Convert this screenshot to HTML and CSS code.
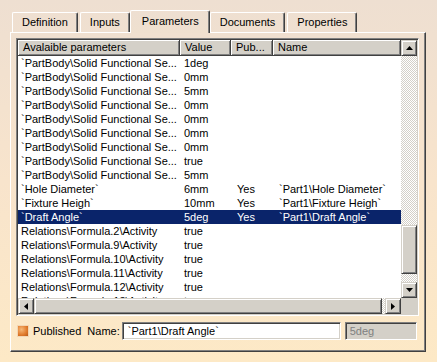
FILE: index.html
```html
<!DOCTYPE html>
<html>
<head>
    <meta charset="UTF-8">
    <title>Parameters</title>
    <link rel="stylesheet" href="styles.css">
</head>

<body>
    <!-- 选项卡 -->
    <div class="tabs">
        <div class="tab">Definition</div>
        <div class="tab">Inputs</div>
        <div class="tab active">Parameters</div>
        <div class="tab">Documents</div>
        <div class="tab">Properties</div>
    </div>

    <div class="panel">
        <!-- 参数列表 -->
        <div class="listbox">
            <div class="list">
                <div class="head">
                    <div class="hcell">Avalaible parameters</div>
                    <div class="hcell">Value</div>
                    <div class="hcell">Pub...</div>
                    <div class="hcell">Name</div>
                </div>
                <div class="row"><span>`PartBody\Solid Functional Se...</span><span>1deg</span><span></span><span></span></div>
                <div class="row"><span>`PartBody\Solid Functional Se...</span><span>0mm</span><span></span><span></span></div>
                <div class="row"><span>`PartBody\Solid Functional Se...</span><span>5mm</span><span></span><span></span></div>
                <div class="row"><span>`PartBody\Solid Functional Se...</span><span>0mm</span><span></span><span></span></div>
                <div class="row"><span>`PartBody\Solid Functional Se...</span><span>0mm</span><span></span><span></span></div>
                <div class="row"><span>`PartBody\Solid Functional Se...</span><span>0mm</span><span></span><span></span></div>
                <div class="row"><span>`PartBody\Solid Functional Se...</span><span>0mm</span><span></span><span></span></div>
                <div class="row"><span>`PartBody\Solid Functional Se...</span><span>true</span><span></span><span></span></div>
                <div class="row"><span>`PartBody\Solid Functional Se...</span><span>5mm</span><span></span><span></span></div>
                <div class="row"><span>`Hole Diameter`</span><span>6mm</span><span>Yes</span><span>`Part1\Hole Diameter`</span></div>
                <div class="row"><span>`Fixture Heigh`</span><span>10mm</span><span>Yes</span><span>`Part1\Fixture Heigh`</span></div>
                <div class="row selected"><span>`Draft Angle`</span><span>5deg</span><span>Yes</span><span>`Part1\Draft Angle`</span></div>
                <div class="row"><span>Relations\Formula.2\Activity</span><span>true</span><span></span><span></span></div>
                <div class="row"><span>Relations\Formula.9\Activity</span><span>true</span><span></span><span></span></div>
                <div class="row"><span>Relations\Formula.10\Activity</span><span>true</span><span></span><span></span></div>
                <div class="row"><span>Relations\Formula.11\Activity</span><span>true</span><span></span><span></span></div>
                <div class="row"><span>Relations\Formula.12\Activity</span><span>true</span><span></span><span></span></div>
                <div class="row"><span>Relations\Formula.13\Activity</span><span>true</span><span></span><span></span></div>
            </div>

            <!-- 竖向滚动条 -->
            <div class="vscroll">
                <div class="sbtn">
                    <svg width="7" height="4" viewBox="0 0 7 4"><polygon points="3.5,0 7,4 0,4" fill="#000"/></svg>
                </div>
                <div class="vtrack"><div class="vthumb"></div></div>
                <div class="sbtn">
                    <svg width="7" height="4" viewBox="0 0 7 4"><polygon points="0,0 7,0 3.5,4" fill="#000"/></svg>
                </div>
            </div>

            <!-- 横向滚动条 -->
            <div class="hscroll">
                <div class="sbtn">
                    <svg width="4" height="7" viewBox="0 0 4 7"><polygon points="4,0 4,7 0,3.5" fill="#000"/></svg>
                </div>
                <div class="hthumb"></div>
                <div class="htrack"></div>
                <div class="sbtn">
                    <svg width="4" height="7" viewBox="0 0 4 7"><polygon points="0,0 4,3.5 0,7" fill="#000"/></svg>
                </div>
            </div>
            <div class="corner"></div>
        </div>

        <!-- 底部 -->
        <div class="bottom">
            <span class="check"></span>
            <label class="pub">Published</label>
            <label class="name-label">Name:</label>
            <div class="field">`Part1\Draft Angle`</div>
            <div class="field disabled">5deg</div>
        </div>
    </div>
</body>
</html>
```

FILE: styles.css
```css
body {
    margin: 0;
    font-family: "Liberation Sans", Arial, sans-serif;
    font-size: 11px;
    color: #000;
    background: linear-gradient(#eedfd1, #f8e4cc 50%, #fde9c6);
    height: 362px;
    overflow: hidden;
}
/* 选项卡 */
.tabs {
    display: flex;
    align-items: flex-end;
    padding: 12px 0 0 12px;
    height: 20px;
}
.tab {
    height: 20px;
    box-sizing: border-box;
    padding: 0 9px;
    line-height: 19px;
    border-top: 1px solid #fff;
    border-left: 1px solid #fff;
    border-right: 1px solid #404040;
    box-shadow: inset -1px 0 #808080;
    border-radius: 2px 2px 0 0;
    margin-right: 2px;
}
.tab.active {
    height: 23px;
    margin: 0 0 -1px -2px;
    padding: 0 10px 0 11px;
    line-height: 21px;
    position: relative;
    z-index: 1;
    background: linear-gradient(#eedfd1, #efe0cf);
}
/* 面板 */
.panel {
    margin-left: 10px;
    width: 416px;
    height: 320px;
    box-sizing: border-box;
    border-top: 1px solid #fff;
    border-left: 1px solid #fff;
    border-right: 1px solid #404040;
    border-bottom: 1px solid #404040;
    box-shadow: inset -1px -1px #808080;
    padding: 5px 0 0 5px;
}
.listbox {
    width: 403px;
    height: 278px;
    box-sizing: border-box;
    border: 1px solid;
    border-color: #808080 #fff #fff #808080;
    box-shadow: inset 1px 1px #404040, inset -1px -1px #d4d0c8;
    padding: 1px;
    display: grid;
    grid-template-columns: 383px 16px;
    grid-template-rows: 258px 16px;
    background: #fff;
}
.list {
    overflow: hidden;
}
.head, .row {
    display: grid;
    grid-template-columns: 162px 51px 42px 1fr;
}
.head {
    height: 16px;
}
.hcell {
    background: #d4d0c8;
    box-sizing: border-box;
    border-right: 1px solid #404040;
    border-bottom: 1px solid #404040;
    box-shadow: inset 1px 1px #fff, inset -1px -1px #808080;
    padding-left: 5px;
    line-height: 15px;
    white-space: nowrap;
    overflow: hidden;
}
.row {
    height: 14px;
    line-height: 14px;
    white-space: nowrap;
}
.row span {
    overflow: hidden;
}
.row span:nth-child(1) { padding-left: 3px; }
.row span:nth-child(2) { padding-left: 4px; }
.row span:nth-child(3) { padding-left: 6px; }
.row span:nth-child(4) { padding-left: 6px; }
.row.selected {
    background: #0a246a;
    color: #fff;
}
/* 滚动条 */
.sbtn {
    width: 16px;
    height: 16px;
    box-sizing: border-box;
    background: #d4d0c8;
    border: 1px solid;
    border-color: #d4d0c8 #404040 #404040 #d4d0c8;
    box-shadow: inset 1px 1px #fff, inset -1px -1px #808080;
    display: flex;
    align-items: center;
    justify-content: center;
}
.vscroll {
    display: flex;
    flex-direction: column;
}
.vtrack, .htrack {
    flex: 1;
    background: repeating-conic-gradient(#d4d0c8 0 25%, #fff 0 50%) 0 0 / 2px 2px;
}
.vtrack {
    padding-top: 169px;
}
.vthumb, .hthumb {
    box-sizing: border-box;
    background: #d4d0c8;
    border: 1px solid;
    border-color: #d4d0c8 #404040 #404040 #d4d0c8;
    box-shadow: inset 1px 1px #fff, inset -1px -1px #808080;
}
.vthumb {
    height: 49px;
}
.hscroll {
    display: flex;
}
.hthumb {
    width: 348px;
}
.corner {
    background: #d4d0c8;
}
/* 底部 */
.bottom {
    display: flex;
    align-items: center;
    margin-top: 6px;
    height: 18px;
}
.check {
    width: 12px;
    height: 12px;
    box-sizing: border-box;
    margin: 0 4px 0 1px;
    border: 1px solid #f3d6b4;
    background: radial-gradient(circle at 35% 35%, #f6b878, #e07a2c 60%, #b85a18);
}
.pub {
    margin-right: 6px;
}
.name-label {
    margin-right: 2px;
}
.field {
    width: 219px;
    height: 18px;
    box-sizing: border-box;
    background: #fff;
    border: 1px solid;
    border-color: #808080 #fff #fff #808080;
    box-shadow: inset 1px 1px #404040, inset -1px -1px #d4d0c8;
    padding-left: 5px;
    line-height: 16px;
    white-space: nowrap;
}
.field.disabled {
    width: 72px;
    margin-left: 4px;
    background: #d4d0c8;
    color: #808080;
    padding-left: 4px;
}
```
